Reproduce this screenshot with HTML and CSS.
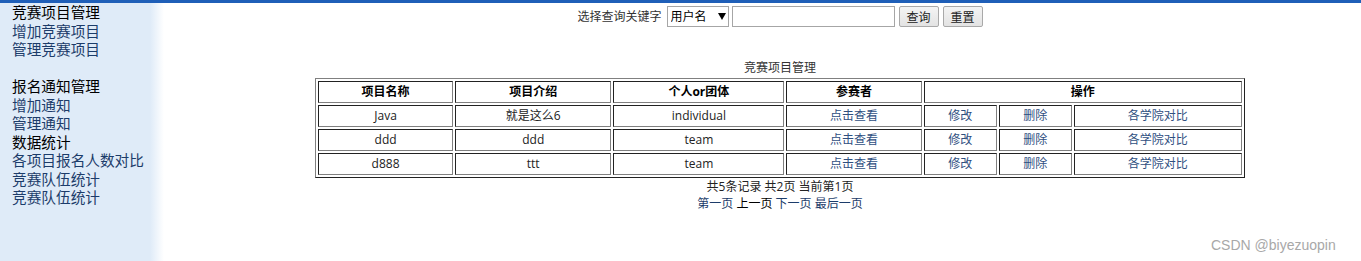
FILE: index.html
```html
<!DOCTYPE html>
<html lang="zh">
<head>
<meta charset="utf-8">
<title>竞赛项目管理</title>
<link rel="stylesheet" href="styles.css">
</head>
<body>
<div class="topbar"></div>
<div class="layout">
  <aside class="sidebar">
    <div class="nav-head">竞赛项目管理</div>
    <a class="nav-link" href="#">增加竞赛项目</a>
    <a class="nav-link" href="#">管理竞赛项目</a>
    <div class="nav-gap"></div>
    <div class="nav-head">报名通知管理</div>
    <a class="nav-link" href="#">增加通知</a>
    <a class="nav-link" href="#">管理通知</a>
    <div class="nav-head">数据统计</div>
    <a class="nav-link" href="#">各项目报名人数对比</a>
    <a class="nav-link" href="#">竞赛队伍统计</a>
    <a class="nav-link" href="#">竞赛队伍统计</a>
  </aside>
  <main class="main">
    <form class="search">
      <span class="search-label">选择查询关键字</span>
      <span class="select-wrap">
        <select class="select"><option>用户名</option></select>
      </span>
      <input class="text-input" type="text">
      <button class="btn" type="button">查询</button>
      <button class="btn" type="button">重置</button>
    </form>
    <div class="title">竞赛项目管理</div>
    <table class="grid">
      <colgroup>
        <col class="c1"><col class="c2"><col class="c3"><col class="c4"><col class="c5"><col class="c6"><col class="c7">
      </colgroup>
      <thead>
        <tr><th>项目名称</th><th>项目介绍</th><th>个人or团体</th><th>参赛者</th><th colspan="3">操作</th></tr>
      </thead>
      <tbody>
        <tr><td>Java</td><td>就是这么6</td><td>individual</td><td><a href="#">点击查看</a></td><td><a href="#">修改</a></td><td><a href="#">删除</a></td><td><a href="#">各学院对比</a></td></tr>
        <tr><td>ddd</td><td>ddd</td><td>team</td><td><a href="#">点击查看</a></td><td><a href="#">修改</a></td><td><a href="#">删除</a></td><td><a href="#">各学院对比</a></td></tr>
        <tr><td>d888</td><td>ttt</td><td>team</td><td><a href="#">点击查看</a></td><td><a href="#">修改</a></td><td><a href="#">删除</a></td><td><a href="#">各学院对比</a></td></tr>
      </tbody>
    </table>
    <div class="pager">
      <div>共5条记录 共2页 当前第1页</div>
      <div><a href="#">第一页</a> <span class="plain">上一页</span> <a href="#">下一页</a> <a href="#">最后一页</a></div>
    </div>
  </main>
</div>
<div class="watermark">CSDN @biyezuopin</div>
</body>
</html>
```

FILE: styles.css
```css
html, body {
  margin: 0;
  padding: 0;
  background: #ffffff;
  height: 261px;
  overflow: hidden;
}
body {
  font-family: "Open Sans", "Noto Sans CJK SC", sans-serif;
  color: #222;
  position: relative;
}
.topbar {
  height: 3px;
  background: #1f5fb8;
}
.layout {
  display: flex;
  height: 258px;
}
.sidebar {
  width: 152px;
  padding-left: 12px;
  flex: none;
  background: linear-gradient(to right, #dfebf8 0, #dfebf8 150px, #ffffff 164px);
  font-size: 14.67px;
  line-height: 18.5px;
  display: flex;
  flex-direction: column;
}
.nav-head {
  color: #000;
}
.nav-link {
  color: #1c3c6a;
  text-decoration: none;
}
.nav-gap {
  height: 18.5px;
}
.main {
  flex: 1;
  padding-left: 35px;
  display: flex;
  flex-direction: column;
  align-items: center;
  font-size: 12px;
}
.search {
  margin: 3px 0 0;
  height: 21px;
  display: flex;
  align-items: center;
}
.search-label {
  color: #333;
  line-height: 21px;
  margin-right: 5px;
}
.select-wrap {
  position: relative;
  display: block;
}
.select-wrap::after {
  content: "";
  position: absolute;
  right: 6px;
  top: 7px;
  border-left: 4px solid transparent;
  border-right: 4px solid transparent;
  border-top: 7px solid #000;
  pointer-events: none;
}
.select {
  appearance: none;
  -webkit-appearance: none;
  width: 62px;
  height: 21px;
  box-sizing: border-box;
  border: 1px solid #a6a6a6;
  border-radius: 0;
  background: #fff;
  padding: 0 0 0 3px;
  margin: 0 3px 0 0;
  font: 12px "Open Sans", "Noto Sans CJK SC", sans-serif;
  color: #000;
}
.text-input {
  width: 163px;
  height: 21px;
  box-sizing: border-box;
  border: 1px solid #a6a6a6;
  margin: 0 4px 0 0;
  padding: 0 2px;
}
.btn {
  width: 40px;
  height: 21px;
  box-sizing: border-box;
  border: 1px solid #a9a9a9;
  border-radius: 2px;
  background: linear-gradient(#f4f4f4, #e3e3e3);
  font: 12px "Open Sans", "Noto Sans CJK SC", sans-serif;
  color: #222;
  padding: 0;
  margin: 0 4px 0 0;
}
.btn:last-child {
  margin-right: 0;
}
.title {
  margin-top: 33px;
  line-height: 16px;
  color: #333;
}
.grid {
  margin-top: 2px;
  width: 930px;
  table-layout: fixed;
  border-collapse: separate;
  border-spacing: 2px;
  border: 1px solid;
  border-color: #808080 #222 #222 #808080;
  font-size: 12px;
}
.c1 { width: 135px; }
.c2 { width: 156px; }
.c3 { width: 171px; }
.c4 { width: 135px; }
.c5 { width: 73px; }
.c6 { width: 73px; }
.c7 { width: 168px; }
.grid th, .grid td {
  border: 1px solid;
  border-color: #222 #808080 #808080 #222;
  height: 22px;
  box-sizing: border-box;
  padding: 0;
  text-align: center;
  line-height: 20px;
}
.grid th {
  font-weight: bold;
  color: #000;
}
.grid td {
  color: #222;
}
.grid a {
  color: #2f4f7f;
  text-decoration: none;
}
.pager {
  text-align: center;
  line-height: 17px;
  color: #222;
}
.pager a {
  color: #1c3c6a;
  text-decoration: none;
}
.pager .plain {
  color: #000;
}
.watermark {
  position: absolute;
  left: 1211px;
  top: 236px;
  font-family: "Liberation Sans", Arial, sans-serif;
  font-size: 14px;
  color: #a8a8a8;
  line-height: 18px;
}
```
